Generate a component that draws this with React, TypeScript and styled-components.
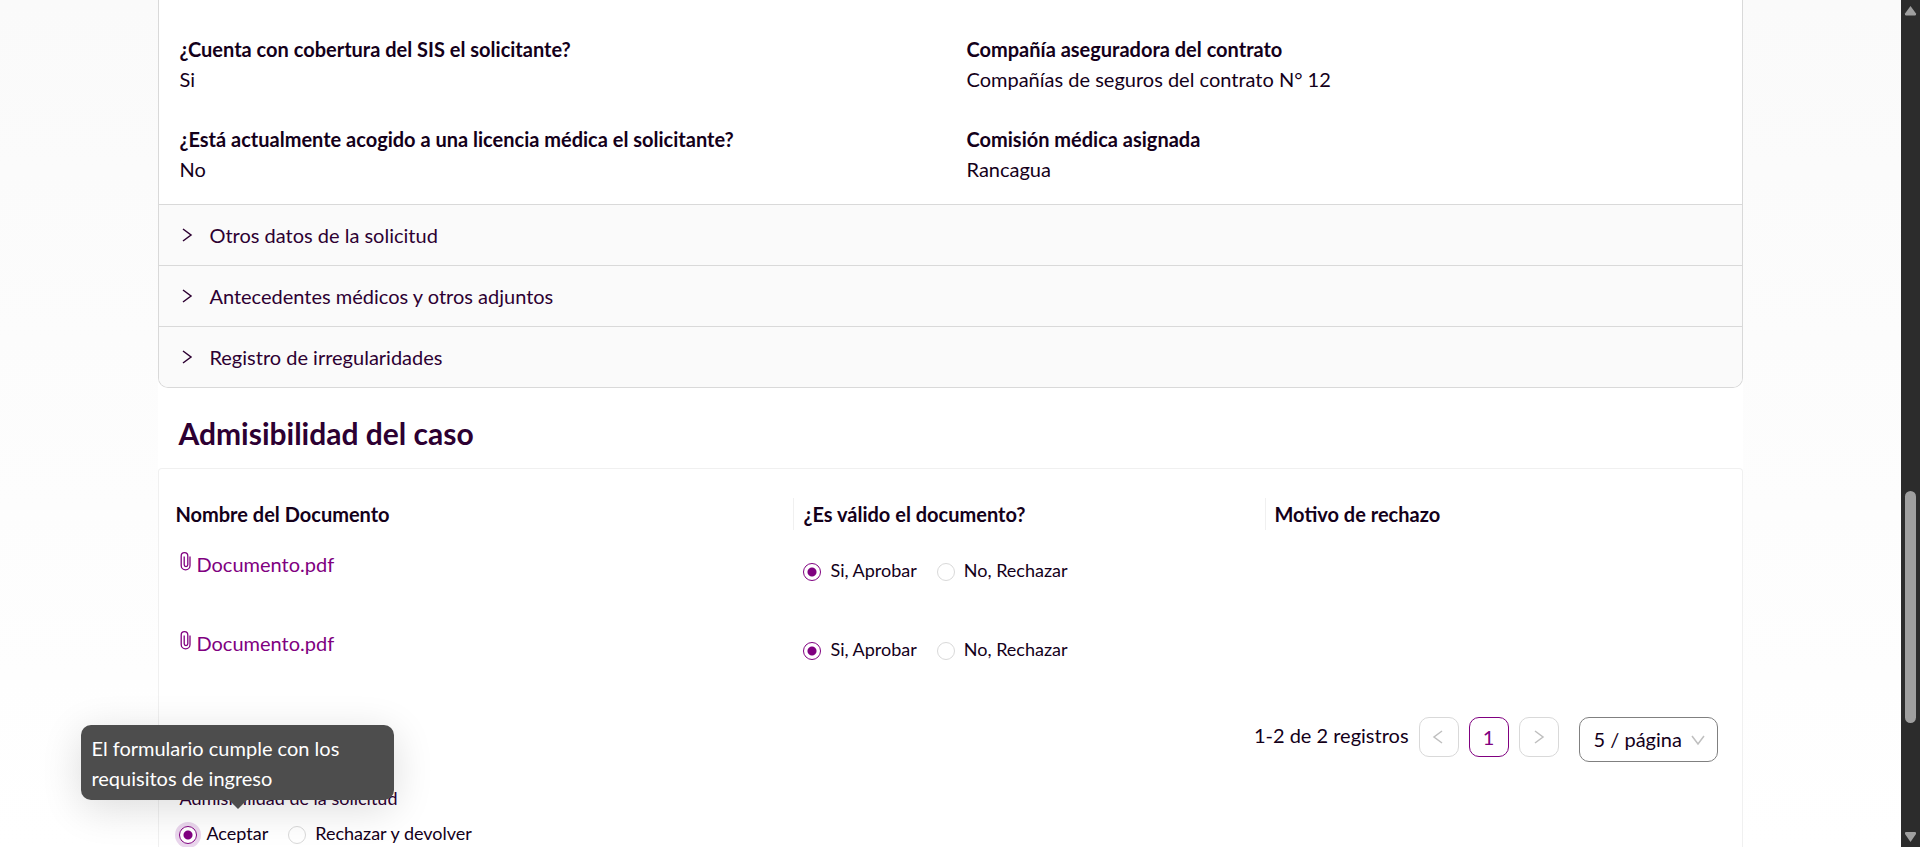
import React from "react";
import styled, { createGlobalStyle } from "styled-components";

const GlobalStyle = createGlobalStyle`
  *, *::before, *::after { box-sizing: border-box; }
  body {
    margin: 0;
    font-family: Lato, "Liberation Sans", sans-serif;
    font-size: 20px;
    line-height: 30px;
    color: #14001a;
    background: #fff;
  }
  button, input, select { font: inherit; color: inherit; margin: 0; }
`;

const Screen = styled.div`
  display: flex;
  height: 100vh;
  overflow: hidden;
`;

const Page = styled.main`
  flex: 1;
  min-width: 0;
  display: flex;
  flex-direction: column;
  align-items: center;
  background: linear-gradient(#fafafa, #fff);
`;

const Content = styled.div`
  flex: 1;
  width: calc(100% * 10 / 12);
  display: flex;
  flex-direction: column;
  background: #fff;
`;

const Collapse = styled.section`
  border: 1px solid #d9d9d9;
  border-top: 0;
  border-radius: 0 0 10px 10px;
  overflow: hidden;
`;

const Fields = styled.dl`
  display: grid;
  grid-template-columns: 1fr 1fr;
  row-gap: 30px;
  margin: 0;
  padding: 34px 4px 20px;
`;

const Field = styled.div`
  padding-left: 16px;
`;

const FieldName = styled.dt`
  font-weight: 700;
`;

const FieldValue = styled.dd`
  margin: 0;
`;

const PanelHeader = styled.button`
  display: flex;
  align-items: center;
  gap: 14px;
  width: 100%;
  height: 61px;
  padding: 0 20px;
  border: 0;
  border-top: 1px solid #d9d9d9;
  background: #fafafa;
  color: #2d0032;
  text-align: left;
  cursor: pointer;
`;

const Title = styled.h2`
  margin: 0;
  padding: 24px 20px 14px;
  font-size: 30px;
  line-height: 42px;
  font-weight: 700;
  color: #2d0032;
`;

const Card = styled.section`
  flex: 1;
  border: 1px solid #f0f0f0;
  border-bottom: 0;
  border-radius: 4px 4px 0 0;
  padding: 23px 6px 0;
`;

const Table = styled.table`
  width: 100%;
  table-layout: fixed;
  border-collapse: collapse;
`;

const HeadCell = styled.th<{ $share: number }>`
  position: relative;
  width: ${(p) => p.$share}%;
  height: 43px;
  padding: 0 10px;
  text-align: left;
  font-weight: 700;

  &:not(:first-child)::before {
    content: "";
    position: absolute;
    left: 0;
    top: 6px;
    width: 1px;
    height: 32px;
    background: #f0f0f0;
  }
`;

const Cell = styled.td`
  height: 79px;
  padding: 14px 10px 0;
  vertical-align: top;
`;

const FileLink = styled.a`
  display: inline-flex;
  align-items: flex-start;
  gap: 2px;
  padding-left: 4px;
  color: #800080;
  text-decoration: none;

  svg { margin-top: 2px; }
`;

const RadioGroup = styled.div`
  display: flex;
  gap: 20px;
  font-size: 18px;
`;

const CellRadios = styled(RadioGroup)`
  padding-top: 6px;
`;

const RadioLabel = styled.label`
  display: flex;
  align-items: center;
  gap: 9px;
`;

const RadioInput = styled.input<{ $focused?: boolean }>`
  appearance: none;
  width: 18px;
  height: 18px;
  margin-top: 3px;
  border: 1px solid #d9d9d9;
  border-radius: 50%;
  background: #fff;
  box-shadow: ${(p) => (p.$focused ? "0 0 0 4px #ead6ed" : "none")};

  &:checked {
    border-color: #800080;
    background: radial-gradient(circle, #800080 4px, #fff 5px);
  }
`;

const Pagination = styled.nav`
  display: flex;
  align-items: flex-start;
  justify-content: flex-end;
  gap: 10px;
  padding: 24px 18px 0 0;
`;

const Total = styled.span`
  line-height: 36px;
`;

const PageButton = styled.button<{ $active?: boolean }>`
  display: flex;
  align-items: center;
  justify-content: center;
  width: 40px;
  height: 40px;
  padding: 0;
  border: 1px solid ${(p) => (p.$active ? "#800080" : "#d9d9d9")};
  border-radius: 10px;
  background: #fff;
  color: ${(p) => (p.$active ? "#800080" : "#bfbfbf")};
`;

const SizePicker = styled.div`
  position: relative;
  width: 139px;
  margin-left: 10px;

  svg {
    position: absolute;
    right: 12px;
    top: 15px;
    color: #bfbfbf;
    pointer-events: none;
  }
`;

const SizeSelect = styled.select`
  appearance: none;
  width: 100%;
  height: 45px;
  padding: 0 14px 2px;
  border: 1px solid #808080;
  border-radius: 10px;
  background: #fff;
`;

const Decision = styled.fieldset`
  position: relative;
  margin: 0;
  padding: 21px 0 0 14px;
  border: 0;
`;

const DecisionName = styled.div`
  font-size: 18px;
  color: #2d0032;
`;

const DecisionRadios = styled(RadioGroup)`
  padding-top: 5px;
`;

const Tooltip = styled.div`
  position: absolute;
  left: -84px;
  bottom: 48px;
  width: 313px;
  padding: 8px 10px 7px;
  border-radius: 10px;
  background: #4d4d4d;
  color: #fff;
  box-shadow: 0 8px 40px rgba(0, 0, 0, 0.14);

  &::after {
    content: "";
    position: absolute;
    left: 50%;
    top: 100%;
    margin-left: -9px;
    border: 9px solid transparent;
    border-top-color: #4d4d4d;
    border-bottom: 0;
  }
`;

const ScrollTrack = styled.div`
  display: flex;
  flex-direction: column;
  align-items: center;
  width: 19px;
  background: #2c2c2c;
  color: #9f9f9f;
`;

const ScrollRail = styled.div`
  flex: 1;
  width: 11px;
  display: grid;
  grid-template-rows: 475fr 232fr 108fr;
`;

const ScrollThumb = styled.div`
  grid-row: 2;
  border-radius: 6px;
  background: #9f9f9f;
`;

type Direction = "left" | "right" | "down";

const chevrons: Record<Direction, string> = {
  left: "M11 2 L3 8 L11 14",
  right: "M4 2 L12 8 L4 14",
  down: "M2 4 L8 12 L14 4",
};

const Chevron = ({ to }: { to: Direction }) => (
  <svg width="16" height="16" viewBox="0 0 16 16" fill="none" stroke="currentColor" strokeWidth="1.5" aria-hidden="true">
    <path d={chevrons[to]} />
  </svg>
);

const PaperClip = () => (
  <svg width="15" height="22" viewBox="0 0 15 22" fill="none" stroke="currentColor" strokeWidth="1.3" aria-hidden="true">
    <path d="M11 5.500V14.500a4.400 4.400 0 0 1-8.800 0V5a3.300 3.300 0 0 1 6.600 0V13.800a1.800 1.800 0 0 1-3.600 0V5.500" />
  </svg>
);

const ScrollArrow = ({ up }: { up?: boolean }) => (
  <svg width="19" height="16" viewBox="0 0 19 16" fill="currentColor" aria-hidden="true">
    <path d={up ? "M9.500 6 L15 13.500 Q15.500 15.500 14 15.500 H5 Q3.500 15.500 4 13.500 Z" : "M9.500 11 L15 3 Q15.500 1 14 1 H5 Q3.500 1 4 3 Z"} />
  </svg>
);

const fields = [
  ["¿Cuenta con cobertura del SIS el solicitante?", "Si"],
  ["Compañía aseguradora del contrato", "Compañías de seguros del contrato N° 12"],
  ["¿Está actualmente acogido a una licencia médica el solicitante?", "No"],
  ["Comisión médica asignada", "Rancagua"],
];

const panels = ["Otros datos de la solicitud", "Antecedentes médicos y otros adjuntos", "Registro de irregularidades"];

const documents = [
  { id: "doc-1", name: "Documento.pdf" },
  { id: "doc-2", name: "Documento.pdf" },
];

export default function App() {
  return (
    <>
      <GlobalStyle />
      <Screen>
        <Page>
          <Content>
            <Collapse>
              <Fields>
                {fields.map(([name, value]) => (
                  <Field key={name}>
                    <FieldName>{name}</FieldName>
                    <FieldValue>{value}</FieldValue>
                  </Field>
                ))}
              </Fields>
              {panels.map((panel) => (
                <PanelHeader key={panel} type="button" aria-expanded="false">
                  <Chevron to="right" />
                  {panel}
                </PanelHeader>
              ))}
            </Collapse>

            <Title>Admisibilidad del caso</Title>

            <Card>
              <Table>
                <thead>
                  <tr>
                    <HeadCell $share={40}>Nombre del Documento</HeadCell>
                    <HeadCell $share={30}>¿Es válido el documento?</HeadCell>
                    <HeadCell $share={30}>Motivo de rechazo</HeadCell>
                  </tr>
                </thead>
                <tbody>
                  {documents.map((doc) => (
                    <tr key={doc.id}>
                      <Cell>
                        <FileLink href="#">
                          <PaperClip />
                          <span>{doc.name}</span>
                        </FileLink>
                      </Cell>
                      <Cell>
                        <CellRadios>
                          <RadioLabel>
                            <RadioInput type="radio" name={doc.id} defaultChecked />
                            Si, Aprobar
                          </RadioLabel>
                          <RadioLabel>
                            <RadioInput type="radio" name={doc.id} />
                            No, Rechazar
                          </RadioLabel>
                        </CellRadios>
                      </Cell>
                      <Cell />
                    </tr>
                  ))}
                </tbody>
              </Table>

              <Pagination aria-label="Paginación">
                <Total>1-2 de 2 registros</Total>
                <PageButton type="button" aria-label="Anterior" disabled>
                  <Chevron to="left" />
                </PageButton>
                <PageButton type="button" $active>1</PageButton>
                <PageButton type="button" aria-label="Siguiente" disabled>
                  <Chevron to="right" />
                </PageButton>
                <SizePicker>
                  <SizeSelect aria-label="Registros por página">
                    <option>5 / página</option>
                  </SizeSelect>
                  <Chevron to="down" />
                </SizePicker>
              </Pagination>

              <Decision aria-labelledby="decision-name">
                <DecisionName id="decision-name">Admisibilidad de la solicitud</DecisionName>
                <DecisionRadios>
                  <RadioLabel>
                    <RadioInput type="radio" name="decision" defaultChecked $focused />
                    Aceptar
                  </RadioLabel>
                  <RadioLabel>
                    <RadioInput type="radio" name="decision" />
                    Rechazar y devolver
                  </RadioLabel>
                </DecisionRadios>
                <Tooltip role="tooltip">El formulario cumple con los requisitos de ingreso</Tooltip>
              </Decision>
            </Card>
          </Content>
        </Page>
        <ScrollTrack aria-hidden="true">
          <ScrollArrow up />
          <ScrollRail>
            <ScrollThumb />
          </ScrollRail>
          <ScrollArrow />
        </ScrollTrack>
      </Screen>
    </>
  );
}
